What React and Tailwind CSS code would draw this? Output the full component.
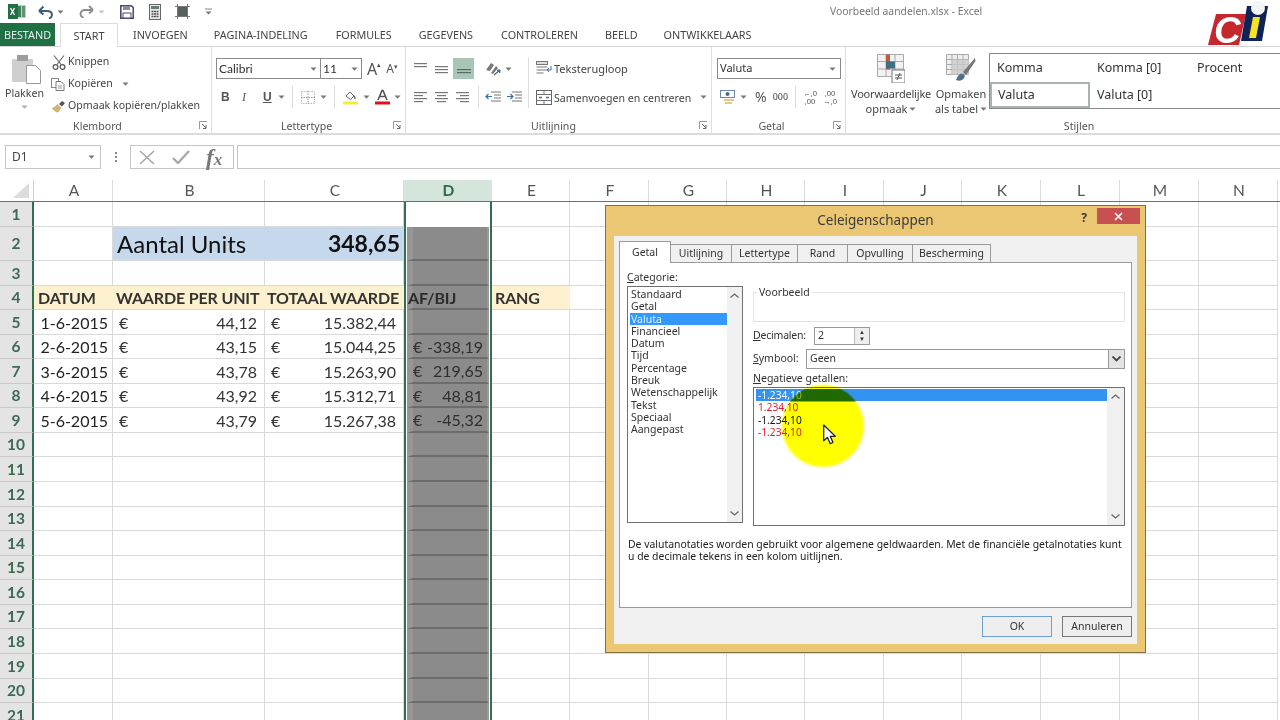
const ui = { fontFamily: '"Noto Sans", "Open Sans", sans-serif' }
const sheetFont = { fontFamily: 'Lato, "Liberation Sans", sans-serif' }

const tabs = [
  ['INVOEGEN', 'ml-[15px]'],
  ['PAGINA-INDELING', 'ml-[26px]'],
  ['FORMULES', 'ml-[28px]'],
  ['GEGEVENS', 'ml-[27px]'],
  ['CONTROLEREN', 'ml-[28px]'],
  ['BEELD', 'ml-[27px]'],
  ['ONTWIKKELAARS', 'ml-[26px]'],
]

const columns = [
  ['A', 'w-[79px]'], ['B', 'w-[152px]'], ['C', 'w-[139px]'], ['D', 'w-[88px]'], ['E', 'w-[78px]'],
  ['F', 'w-[79px]'], ['G', 'w-[78px]'], ['H', 'w-[78px]'], ['I', 'w-[79px]'], ['J', 'w-[78px]'],
  ['K', 'w-[79px]'], ['L', 'w-[79px]'], ['M', 'w-[79px]'], ['N', 'w-[79px]'],
]

const rowHeights = ['h-[25px]', 'h-[34px]', 'h-[25px]', 'h-[24px]', 'h-[25px]', 'h-[24px]', 'h-[25px]', 'h-[24px]', 'h-[25px]', 'h-[24px]', 'h-[25px]', 'h-[25px]', 'h-[24px]', 'h-[25px]', 'h-[24px]', 'h-[25px]', 'h-[24px]', 'h-[25px]', 'h-[25px]', 'h-[24px]', 'h-[25px]']

const data = {
  5: ['1-6-2015', '44,12', '15.382,44', null],
  6: ['2-6-2015', '43,15', '15.044,25', '-338,19'],
  7: ['3-6-2015', '43,78', '15.263,90', '219,65'],
  8: ['4-6-2015', '43,92', '15.312,71', '48,81'],
  9: ['5-6-2015', '43,79', '15.267,38', '-45,32'],
}

const categories = ['Standaard', 'Getal', 'Valuta', 'Financieel', 'Datum', 'Tijd', 'Percentage', 'Breuk', 'Wetenschappelijk', 'Tekst', 'Speciaal', 'Aangepast']
const dialogTabs = [
  ['Uitlijning', 'w-[61px]'], ['Lettertype', 'w-[66px]'], ['Rand', 'w-[50px]'], ['Opvulling', 'w-[65px]'], ['Bescherming', 'w-[78px]'],
]

function Caret({ className = '' }) {
  return (
    <svg width="7" height="4" viewBox="0 0 7 4" className={className}>
      <path d="M0.5 0.5h6L3.5 3.8z" fill="#777" />
    </svg>
  )
}

function Lines({ rows, active }) {
  return (
    <svg width="16" height="14" viewBox="0 0 16 14">
      {rows.map(([x, y, w], i) => (
        <rect key={i} x={x} y={y} width={w} height="1.2" fill={active ? '#5b6b62' : '#777'} />
      ))}
    </svg>
  )
}

function Launcher({ className = '' }) {
  return (
    <svg width="9" height="9" viewBox="0 0 9 9" className={className}>
      <path d="M0.5 8V0.5H8" fill="none" stroke="#999" />
      <path d="M3 3l4 4M7 4v3.5H4" fill="none" stroke="#666" />
    </svg>
  )
}

function Sep() {
  return <div className="h-[22px] w-px bg-[#dcdcdc]" />
}

function Group({ label, width, children, launcher, center }) {
  return (
    <div className={`relative flex h-full shrink-0 flex-col border-r border-[#dedede] ${width}`}>
      <div className="h-[73px]">{children}</div>
      <div className={`text-center text-[10.6px] leading-[14px] text-[#555] ${center}`}>{label}</div>
      {launcher && <Launcher className="absolute bottom-[3px] right-[3px]" />}
    </div>
  )
}

function TitleBar() {
  return (
    <div className="flex h-[23px] items-center">
      <svg width="18" height="15" viewBox="0 0 18 15" className="ml-[8px]">
        <rect x="6" y="1" width="12" height="13" fill="#bcd3c5" />
        <rect x="10" y="2" width="3" height="11" fill="#3d7f5b" />
        <rect x="14" y="2" width="3" height="11" fill="#5d946f" />
        <rect x="0" y="0" width="10" height="15" fill="#1f7145" />
        <path d="M2.5 4l4 7M6.5 4l-4 7" stroke="#fff" strokeWidth="1.4" />
      </svg>
      <svg width="16" height="14" viewBox="0 0 16 14" className="ml-[12px]">
        <path d="M1 6l4.5-4.5M1 6l4.5 3.5M1 6h8c3.5 0 5 2 5 4s-1 3-3 3.5" fill="none" stroke="#3f6077" strokeWidth="2" />
      </svg>
      <Caret className="ml-[3px]" />
      <svg width="15" height="14" viewBox="0 0 15 14" className="ml-[15px]">
        <path d="M14 5l-4-4M14 5l-4 3.5M14 5H6.5C3 5 1.5 7 1.5 9s1 3 3 3.5" fill="none" stroke="#8a8a8a" strokeWidth="1.8" />
      </svg>
      <Caret className="ml-[4px] opacity-40" />
      <svg width="14" height="14" viewBox="0 0 14 14" className="ml-[15px]">
        <path d="M0.8 0.8h10.5l2 2v10.4H0.8z" fill="none" stroke="#4a4a6a" strokeWidth="1.6" />
        <rect x="3" y="1" width="7" height="4" fill="#8c8ca8" />
        <rect x="3" y="8" width="8" height="5" fill="#fff" stroke="#4a4a6a" />
      </svg>
      <svg width="12" height="16" viewBox="0 0 12 16" className="ml-[15px]">
        <rect x="0.5" y="0.5" width="11" height="15" fill="#e8e8e8" stroke="#666" />
        <rect x="2" y="2" width="8" height="3" fill="#6a7a72" />
        <path d="M2.5 7.5h2M5 7.5h2M7.5 7.5h2M2.5 10h2M5 10h2M7.5 10h2M2.5 12.5h2M5 12.5h2M7.5 12.5h2" stroke="#555" strokeWidth="1.4" />
      </svg>
      <svg width="15" height="15" viewBox="0 0 15 15" className="ml-[14px]">
        <rect x="2.5" y="2.5" width="10" height="10" fill="#56605c" />
        <path d="M2.5 0v15M12.5 0v15M0 2.5h15M0 12.5h15" stroke="#777" strokeWidth="1" />
      </svg>
      <svg width="7" height="7" viewBox="0 0 7 7" className="ml-[15px]">
        <path d="M0 1h7" stroke="#888" />
        <path d="M0.5 3.5h6L3.5 6.5z" fill="#777" />
      </svg>
      <div className="ml-[618px] text-[10.35px] text-[#777]">Voorbeeld aandelen.xlsx - Excel</div>
    </div>
  )
}

function Tabs() {
  return (
    <div className="flex h-[24px] items-stretch border-b border-[#d6d6d6] text-[10.8px] text-[#444]">
      <div className="flex w-[55px] items-center justify-center bg-[#1f7145] pt-px text-[#e4efe8]">BESTAND</div>
      <div className="z-10 ml-[5px] mb-[-1px] flex w-[58px] items-center justify-center border-x border-t border-[#dcdcdc] bg-white pt-px">START</div>
      {tabs.map(([name, margin]) => (
        <div key={name} className={`flex items-center pt-px ${margin}`}>{name}</div>
      ))}
    </div>
  )
}

function Klembord() {
  return (
    <Group label="Klembord" width="w-[212px]" launcher center="pr-[16px]">
      <div className="flex text-[10.6px] text-[#444]">
        <div className="flex w-[49px] flex-col items-center pt-[8px]">
          <svg width="30" height="29" viewBox="0 0 30 29" className="ml-[4px]">
            <rect x="0" y="4" width="21" height="23" rx="1" fill="#cfcfcf" />
            <rect x="5" y="0" width="11" height="6" fill="#9d9d9d" />
            <path d="M14.5 10.5h9l5 5v13h-14z" fill="#fff" stroke="#999" />
          </svg>
          <div className="mt-[2px] leading-[14px]">Plakken</div>
          <Caret className="mt-[5px] opacity-60" />
        </div>
        <div className="flex flex-col pt-[4px]">
          <div className="flex h-[22px] items-center">
            <svg width="14" height="15" viewBox="0 0 14 15" className="ml-[3px]">
              <path d="M2 0.5l7 9M12 0.5l-7 9" stroke="#666" strokeWidth="1.1" />
              <circle cx="3.5" cy="12" r="2.4" fill="none" stroke="#555" strokeWidth="1.2" />
              <circle cx="10.5" cy="12" r="2.4" fill="none" stroke="#555" strokeWidth="1.2" />
            </svg>
            <span className="ml-[2px]">Knippen</span>
          </div>
          <div className="flex h-[22px] items-center">
            <svg width="14" height="13" viewBox="0 0 14 13" className="ml-[2px]">
              <rect x="0.5" y="0.5" width="7" height="9" fill="#fff" stroke="#888" />
              <path d="M5 3.5h5l3 3v6H5z" fill="#fff" stroke="#777" />
              <path d="M7 8h4M7 10h4" stroke="#999" />
            </svg>
            <span className="ml-[3px]">Kopiëren</span>
            <Caret className="ml-[9px]" />
          </div>
          <div className="flex h-[22px] items-center">
            <svg width="15" height="13" viewBox="0 0 15 13" className="ml-[2px]">
              <path d="M0.5 8c2 0 4-2 6-4l4 4c-2 2-2 4-4 4.5-2-.5-4-2-6-4.5z" fill="#d4b377" />
              <path d="M8 4l3-3 3 2-3 3.5z" fill="#555" />
            </svg>
            <span className="ml-[2px] whitespace-nowrap">Opmaak kopiëren/plakken</span>
          </div>
        </div>
      </div>
    </Group>
  )
}

function Lettertype() {
  return (
    <Group label="Lettertype" width="w-[194px]" launcher center="pr-[4px]">
      <div className="pt-[11px] pl-[4px]">
        <div className="flex items-center">
          <div className="flex h-[21px] w-[105px] items-center justify-between border border-[#8a8a8a] pl-[2px] pr-[3px] text-[#333]">
            <span style={sheetFont} className="text-[12px]">Calibri</span><Caret />
          </div>
          <div className="ml-[-1px] flex h-[21px] w-[42px] items-center justify-between border border-[#8a8a8a] pl-[2px] pr-[3px] text-[#333]">
            <span style={sheetFont} className="text-[12px]">11</span><Caret />
          </div>
          <div className="ml-[5px] flex items-start text-[16px] leading-none text-[#555]">A<span className="text-[7px]">▴</span></div>
          <div className="ml-[5px] flex items-start text-[12px] leading-none text-[#555]">A<span className="text-[7px]">▾</span></div>
        </div>
        <div className="mt-[7px] flex h-[22px] items-center text-[#555]">
          <span className="ml-[5px] w-[21px] text-[12px] font-bold" style={{ fontFamily: '"Liberation Sans"' }}>B</span>
          <span className="w-[21px] text-[12px] italic" style={{ fontFamily: '"Liberation Serif"' }}>I</span>
          <span className="w-[15px] text-[12px] font-bold underline" style={{ fontFamily: '"Liberation Sans"' }}>U</span>
          <Caret />
          <div className="mx-[7px]"><Sep /></div>
          <svg width="14" height="13" viewBox="0 0 14 13" className="ml-[1px]">
            <rect x="0.5" y="0.5" width="13" height="12" fill="none" stroke="#bbb" strokeDasharray="1.5 1" />
            <path d="M7 0v13M0 6.5h14" stroke="#999" strokeDasharray="1.5 1" />
          </svg>
          <Caret className="ml-[5px]" />
          <div className="mx-[7px]"><Sep /></div>
          <svg width="16" height="16" viewBox="0 0 16 16" className="ml-[1px]">
            <path d="M3 7l4-4 4 4-3.5 3.5z" fill="#fff" stroke="#666" />
            <path d="M11 7c1 1.5 1.5 2 1 3" fill="none" stroke="#666" strokeWidth="1.4" />
            <rect x="0" y="12.5" width="15" height="3" fill="#f3ee3a" />
          </svg>
          <Caret className="ml-[4px]" />
          <svg width="15" height="16" viewBox="0 0 15 16" className="ml-[5px]">
            <path d="M3 11L7 1.5h1L12 11M4.6 7.5h6" fill="none" stroke="#555" strokeWidth="1.6" />
            <rect x="0" y="12.5" width="15" height="3" fill="#d8131b" />
          </svg>
          <Caret className="ml-[4px]" />
        </div>
      </div>
    </Group>
  )
}

function Uitlijning() {
  return (
    <Group label="Uitlijning" width="w-[306px]" launcher center="pr-[10px]">
      <div className="flex pl-[8px] pt-[11px] text-[#444]">
        <div className="w-[64px]">
          <div className="flex h-[21px] items-center gap-[5px]">
            <Lines rows={[[0, 1, 13], [0, 4, 13]]} />
            <Lines rows={[[0, 4, 13], [0, 7, 13], [0, 10, 13]]} />
            <div className="ml-[-3px] flex h-[21px] w-[21px] shrink-0 items-center justify-center bg-[#a9c5b5]">
              <Lines rows={[[1, 7, 14], [1, 10, 14]]} active />
            </div>
          </div>
          <div className="mt-[7px] flex h-[22px] items-center gap-[5px]">
            <Lines rows={[[0, 2, 13], [0, 5, 9], [0, 8, 13], [0, 11, 9]]} />
            <Lines rows={[[0, 2, 13], [2, 5, 9], [0, 8, 13], [2, 11, 9]]} />
            <Lines rows={[[0, 2, 13], [4, 5, 9], [0, 8, 13], [4, 11, 9]]} />
          </div>
        </div>
        <div className="w-[50px]">
          <div className="flex h-[21px] items-center pl-[7px]">
            <svg width="17" height="14" viewBox="0 0 17 14">
              <path d="M1 8l5-7 3 2-4 6zM6 11l5-7 2 2-5 6z" fill="#777" />
              <path d="M9 13l6-5M15 8l-3 .5M15 8l-.5 3" fill="none" stroke="#4d6e88" strokeWidth="1.4" />
            </svg>
            <Caret className="ml-[3px]" />
          </div>
          <div className="mt-[7px] flex h-[22px] items-center gap-[5px] border-l border-[#dcdcdc] pl-[6px]">
            <svg width="16" height="12" viewBox="0 0 16 12"><path d="M6 1h10M9 4h7M9 7h7M6 10h10" stroke="#777" /><path d="M7 5.5H1M3.5 3L1 5.5 3.5 8" fill="none" stroke="#3c6f9f" strokeWidth="1.2" /></svg>
            <svg width="16" height="12" viewBox="0 0 16 12"><path d="M6 1h10M9 4h7M9 7h7M6 10h10" stroke="#777" /><path d="M1 5.5h6M4.5 3L7 5.5 4.5 8" fill="none" stroke="#3c6f9f" strokeWidth="1.2" /></svg>
          </div>
        </div>
        <div className="h-[50px] border-l border-[#dcdcdc] pl-[7px]">
          <div className="flex h-[21px] items-center text-[11px]">
            <svg width="16" height="15" viewBox="0 0 16 15">
              <rect x="0.5" y="0.5" width="11" height="3" fill="#ddd" stroke="#777" />
              <path d="M0.5 6h11M0.5 9h11M0.5 12h7" stroke="#777" />
              <path d="M15 5v4h-4M13 7l-2 2 2 2" fill="none" stroke="#3c6f9f" />
            </svg>
            <span className="ml-[2px] pt-px">Teksterugloop</span>
          </div>
          <div className="mt-[7px] flex h-[22px] items-center text-[10.6px]">
            <svg width="16" height="15" viewBox="0 0 16 15">
              <rect x="0.5" y="0.5" width="15" height="14" fill="#fff" stroke="#666" />
              <path d="M0.5 4.5h15M0.5 10.5h15M8 0.5v4M8 10.5v4" stroke="#777" />
              <path d="M3 7.5h3M10 7.5h3" stroke="#3c6f9f" strokeWidth="1.3" />
            </svg>
            <span className="ml-[2px] whitespace-nowrap pt-[3px]">Samenvoegen en centreren</span>
            <Caret className="ml-[9px]" />
          </div>
        </div>
      </div>
    </Group>
  )
}

function Getal() {
  return (
    <Group label="Getal" width="w-[134px]" launcher center="pr-[14px]">
      <div className="pl-[5px] pt-[11px]">
        <div className="flex h-[21px] w-[124px] items-center justify-between border border-[#8a8a8a] pl-[2px] pr-[4px] text-[11px] text-[#333]">
          <span>Valuta</span><Caret />
        </div>
        <div className="mt-[7px] flex h-[22px] items-center text-[#555]">
          <svg width="16" height="15" viewBox="0 0 16 15" className="ml-[3px]">
            <rect x="0.5" y="0.5" width="14" height="7" fill="#fff" stroke="#6a8aa8" />
            <circle cx="7.5" cy="4" r="2" fill="#4a6a88" />
            <rect x="4" y="9" width="10" height="2" fill="#e8c88a" />
            <rect x="5" y="12" width="7" height="2" fill="#e8c88a" />
          </svg>
          <Caret className="ml-[4px]" />
          <span className="ml-[8px] text-[14px] leading-none">%</span>
          <span className="ml-[6px] text-[9px] font-medium">000</span>
          <div className="ml-[7px]"><Sep /></div>
          <span className="ml-[5px] w-[18px] text-center text-[7.5px] leading-[8px] text-[#555]">←,0<br />,00</span>
          <span className="ml-[2px] w-[18px] text-center text-[7.5px] leading-[8px] text-[#555]">,00<br />→,0</span>
        </div>
      </div>
    </Group>
  )
}

function Styles() {
  return (
    <div className="relative flex h-full flex-1 flex-col">
      <div className="flex h-[73px]">
        <div className="ml-[10px] flex w-[70px] shrink-0 flex-col items-center pt-[7px] text-[11px] leading-[15px] text-[#444]">
          <svg width="28" height="29" viewBox="0 0 28 29">
            <path d="M0.5 0.5h26v22h-26zM0.5 7.5h26M0.5 15h26M9 0.5v22M18 0.5v22" fill="#f2f2f2" stroke="#aaa" />
            <rect x="9" y="0.5" width="4" height="15" fill="#bf5b3f" />
            <rect x="9" y="7.5" width="9" height="7" fill="#3f6c86" />
            <rect x="15" y="16" width="13" height="13" fill="#fff" stroke="#777" />
            <path d="M18 21h7M18 24h7M20 26l3-7" stroke="#555" />
          </svg>
          <span className="mt-[3px] whitespace-nowrap tracking-[-0.2px]">Voorwaardelijke</span>
          <span className="flex items-center">opmaak <Caret className="ml-[2px]" /></span>
        </div>
        <div className="flex w-[70px] shrink-0 flex-col items-center pt-[7px] text-[11px] leading-[15px] text-[#444]">
          <svg width="30" height="29" viewBox="0 0 30 29">
            <path d="M0.5 0.5h22v20h-22zM0.5 5.5h22M0.5 10.5h22M0.5 15.5h22M6 0.5v20M11.5 0.5v20M17 0.5v20" fill="#eee" stroke="#aaa" />
            <rect x="6" y="5.5" width="17" height="15" fill="#c9c9c9" opacity="0.8" />
            <path d="M29 4L17 18l3 3L29.5 7z" fill="#777" />
            <path d="M10 26c2-6 5-7 7-6 2 1 3 3-1 6-2 1-4 1-6 0z" fill="#4a7390" />
          </svg>
          <span className="mt-[3px]">Opmaken</span>
          <span className="flex items-center whitespace-nowrap">als tabel <Caret className="ml-[2px]" /></span>
        </div>
        <div className="ml-[-7px] mt-[6px] grid h-[56px] flex-1 grid-cols-[100px_100px_1fr] grid-rows-[28px_26px] border border-r-0 border-[#888] text-[12.5px] text-[#333]">
          <div className="flex items-center pl-[7px]">Komma</div>
          <div className="flex items-center pl-[7px]">Komma [0]</div>
          <div className="flex items-center pl-[7px]">Procent</div>
          <div className="flex items-center border-2 border-[#a7b5ae] pl-[6px]">Valuta</div>
          <div className="flex items-center pl-[7px]">Valuta [0]</div>
        </div>
      </div>
      <div className="pl-[32px] text-center text-[10.6px] leading-[14px] text-[#555]">Stijlen</div>
    </div>
  )
}

function Logo() {
  return (
    <svg width="66" height="52" viewBox="0 0 66 52" className="absolute left-[1207px] top-0 z-20">
      <path d="M9 14h30l-7 31H1z" fill="#c6262e" />
      <text x="7" y="43" fontFamily="Liberation Sans" fontWeight="700" fontStyle="italic" fontSize="37" fill="#fff">C</text>
      <path d="M40 6h21l-6 35H34z" fill="#0f2358" />
      <path d="M46 17h7l-4 21h-7z" fill="#f7e225" />
      <circle cx="51" cy="8" r="7" fill="#f4f4f4" />
    </svg>
  )
}

function FormulaBar() {
  return (
    <div className="mt-[10px] flex h-[24px]">
      <div className="ml-[5px] flex w-[96px] items-center justify-between border border-[#c6c6c6] pl-[6px] pr-[5px] text-[12px] text-[#444]">
        <span>D1</span><Caret />
      </div>
      <div className="flex w-[29px] flex-col items-center justify-center gap-[2px]">
        <span className="h-[2px] w-[2px] bg-[#888]" />
        <span className="h-[2px] w-[2px] bg-[#888]" />
        <span className="h-[2px] w-[2px] bg-[#888]" />
      </div>
      <div className="flex w-[104px] items-center border border-[#c6c6c6]">
        <svg width="16" height="15" viewBox="0 0 16 15" className="ml-[8px]"><path d="M1 1l14 13M15 1L1 14" stroke="#a9a9a9" strokeWidth="1.6" /></svg>
        <svg width="18" height="14" viewBox="0 0 18 14" className="ml-[17px]"><path d="M1 8l5 5L17 1" fill="none" stroke="#a9a9a9" strokeWidth="2.4" /></svg>
        <span className="ml-[16px] text-[23px] font-bold italic leading-none text-[#777]" style={{ fontFamily: '"Liberation Serif"' }}>f<span className="text-[17px]">x</span></span>
      </div>
      <div className="ml-[3px] flex-1 border-y border-l border-[#c6c6c6]" />
    </div>
  )
}

function Cell({ column, row }) {
  const values = data[row]
  const selected = column === 'D'
  const amber = row === 4 && (column === 'A' || column === 'B' || column === 'C' || column === 'E')
  const blue = row === 2 && (column === 'B' || column === 'C')
  let content = null
  let fill = 'border-r border-b border-[#d9d9d9]'
  if (blue) fill = 'border-b border-[#d9d9d9] bg-[#c6d9ec]'
  if (amber) fill = 'border-b border-[#d9d9d9] bg-[#fdf1d0]'
  if (selected) fill = row === 1 ? '' : 'mx-px border-b-2 border-b-[#6c6c6c] border-l-[6px] border-l-[#969696] border-r-2 border-r-[#999] bg-[#8b8b8b]'

  if (row === 2 && column === 'B') {
    content = <span className="whitespace-nowrap pl-[4px] text-[24px] text-[#111]">Aantal Units</span>
  }
  if (row === 2 && column === 'C') {
    content = <span className="ml-auto pr-[4px] text-[23px] font-bold text-[#111]">348,65</span>
  }
  if (row === 4) {
    const heads = { A: ['DATUM', 'pl-[4px]'], B: ['WAARDE PER UNIT', 'pl-[3px]'], C: ['TOTAAL WAARDE', 'pl-[2px]'], D: ['AF/BIJ', 'ml-[-5px] text-[#2c2c2c]'], E: ['RANG', 'pl-[3px]'] }
    if (heads[column]) {
      content = <span className={`whitespace-nowrap pt-px text-[16px] font-bold tracking-[-0.15px] ${heads[column][1]}`}>{heads[column][0]}</span>
    }
  }
  if (values) {
    if (column === 'A') content = <span className="ml-auto pr-[4px] pt-px text-[16px] text-[#222]">{values[0]}</span>
    if (column === 'B' || column === 'C') {
      content = (
        <>
          <span className="pl-[6px] pt-px text-[16px]">€</span>
          <span className="ml-auto pr-[7px] pt-px text-[16px]">{values[column === 'B' ? 1 : 2]}</span>
        </>
      )
    }
    if (column === 'D' && values[3]) {
      content = (
        <>
          <span className="pt-px text-[16px] text-[#333]">€</span>
          <span className="ml-auto pr-[4px] pt-px text-[16px] text-[#2e2e2e]">{values[3]}</span>
        </>
      )
    }
  }

  return (
    <div className={`flex h-full shrink-0 ${columns.find((c) => c[0] === column)[1]} ${selected ? 'border-x-2 border-x-[#2f6f52]' : ''}`}>
      <div className={`flex h-full min-w-0 flex-1 items-center ${fill}`}>{content}</div>
    </div>
  )
}

function Sheet() {
  return (
    <div style={sheetFont} className="mt-[11px] text-[#333]">
      <div className="flex h-[22px] border-b border-[#5c7a6c] text-[15.5px]">
        <div className="flex w-[34px] shrink-0 items-end justify-end border-r border-[#d0d0d0] pb-[3px] pr-[4px]">
          <svg width="16" height="15" viewBox="0 0 16 15"><path d="M16 0v15H0z" fill="#dcdcdc" /></svg>
        </div>
        {columns.map(([name, width]) => (
          <div
            key={name}
            className={`flex shrink-0 items-center justify-center border-r pl-[2px] ${width} ${name === 'D' ? 'border-[#d4e6dc] bg-[#d4e6dc] font-bold text-[#2a6b4d]' : 'border-[#dcdcdc] text-[#555]'}`}
          >
            {name}
          </div>
        ))}
      </div>
      {rowHeights.map((height, i) => (
        <div key={i} className={`flex ${height}`}>
          <div className="flex w-[34px] shrink-0 items-center justify-center border-b border-r-2 border-b-[#c8c8c8] border-r-[#2f6f52] bg-[#e3e4e3] pt-px text-[15.5px] font-bold text-[#3c6a55]">
            {i + 1}
          </div>
          {columns.map(([name]) => (
            <Cell key={name} column={name} row={i + 1} />
          ))}
        </div>
      ))}
    </div>
  )
}

function ScrollArrows({ width = 'w-[17px]' }) {
  return (
    <div className={`flex shrink-0 flex-col items-center justify-between bg-[#f0f0f0] py-[6px] ${width}`}>
      <svg width="9" height="5" viewBox="0 0 9 5"><path d="M0.5 4.5l4-3.5 4 3.5" fill="none" stroke="#666" strokeWidth="1.3" /></svg>
      <svg width="9" height="5" viewBox="0 0 9 5"><path d="M0.5 0.5l4 3.5 4-3.5" fill="none" stroke="#666" strokeWidth="1.3" /></svg>
    </div>
  )
}

function NegativeRow({ children, className }) {
  return <div className={`h-[12.3px] pl-[2px] text-[10.2px] leading-[12.3px] ${className}`}>{children}</div>
}

function Dialog() {
  return (
    <div style={ui} className="absolute left-[605px] top-[205px] z-10 flex h-[448px] w-[541px] flex-col border border-[#857044] bg-[#ebc673] px-[8px] pb-[8px] text-[10.5px] text-[#333]">
      <div className="relative flex h-[30px] shrink-0 items-center justify-center pb-[2px] text-[13.5px] text-[#3a3a3a]">
        Celeigenschappen
        <span className="absolute right-[50px] top-[3px] text-[12px] font-bold">?</span>
        <div className="absolute right-[-3px] top-[2px] flex h-[16px] w-[43px] items-center justify-center bg-[#c75050]">
          <svg width="9" height="9" viewBox="0 0 9 9"><path d="M1 1l7 7M8 1L1 8" stroke="#fff" strokeWidth="1.6" /></svg>
        </div>
      </div>
      <div className="flex flex-1 flex-col bg-[#f0f0f0] px-[5px]">
        <div className="flex h-[26px] items-end">
          <div className="z-10 mb-[-1px] flex h-[22px] w-[52px] items-center justify-center border border-b-0 border-[#9a9a9a] bg-white">Getal</div>
          {dialogTabs.map(([name, width]) => (
            <div key={name} className={`flex h-[18px] items-center justify-center border border-l-0 border-b-0 border-[#9a9a9a] bg-[#f0f0f0] ${width}`}>{name}</div>
          ))}
        </div>
        <div className="h-[346px] border border-[#9a9a9a] bg-white pl-[7px] pr-[6px] pt-[7px]">
          <div className="flex h-[264px] gap-[10px]">
            <div className="w-[116px] shrink-0">
              <div className="h-[16px] leading-[14px]"><span className="underline">C</span>ategorie:</div>
              <div className="flex h-[237px] border border-[#707070]">
                <div className="flex-1 pl-[2px] pt-px">
                  {categories.map((c) => (
                    <div key={c} className={`h-[12.3px] whitespace-nowrap pl-px leading-[12.3px] ${c === 'Valuta' ? 'bg-[#3399ff] text-[#dff0ff]' : ''}`}>{c}</div>
                  ))}
                </div>
                <ScrollArrows width="w-[15px]" />
              </div>
            </div>
            <div className="flex-1 pt-[22px]">
              <div className="relative h-[30px] border border-[#e3e3e3]">
                <span className="absolute left-[3px] top-[-8px] bg-white px-[2px] leading-[14px]">Voorbeeld</span>
              </div>
              <div className="mt-[5px] flex h-[18px] items-center">
                <span className="w-[61px] whitespace-nowrap tracking-[-0.2px]"><span className="underline">D</span>ecimalen:</span>
                <div className="flex h-[18px] w-[56px] items-center justify-between border border-[#999] pl-[3px]">
                  <span>2</span>
                  <div className="flex h-full w-[15px] flex-col items-center justify-center border-l border-[#bbb] bg-[#eee] text-[6px] leading-[7px]">
                    <span>▲</span><span>▼</span>
                  </div>
                </div>
              </div>
              <div className="mt-[4px] flex h-[20px] items-center">
                <span className="w-[53px] whitespace-nowrap"><span className="underline">S</span>ymbool:</span>
                <div className="flex h-[20px] flex-1 items-center justify-between border border-[#999] pl-[3px]">
                  <span>Geen</span>
                  <div className="flex h-full w-[16px] items-center justify-center border-l border-[#999] bg-[#e4e4e4]">
                    <svg width="9" height="6" viewBox="0 0 9 6"><path d="M0.5 0.5l4 4 4-4" fill="none" stroke="#444" strokeWidth="1.8" /></svg>
                  </div>
                </div>
              </div>
              <div className="mt-[2px] h-[16px] leading-[14px]"><span className="underline">N</span>egatieve getallen:</div>
              <div className="flex h-[139px] border border-[#707070]">
                <div className="flex-1 pl-[2px] pt-px">
                  <NegativeRow className="bg-[#3393f0] text-white">-1.234,10</NegativeRow>
                  <NegativeRow className="text-[#e01e2e]">1.234,10</NegativeRow>
                  <NegativeRow className="text-[#111]">-1.234,10</NegativeRow>
                  <NegativeRow className="text-[#e01e2e]">-1.234,10</NegativeRow>
                </div>
                <ScrollArrows />
              </div>
            </div>
          </div>
          <p className="ml-px mt-[4px] w-[500px] text-[10.42px] leading-[12.3px] text-[#222]">
            De valutanotaties worden gebruikt voor algemene geldwaarden. Met de financiële getalnotaties kunt u de decimale tekens in een kolom uitlijnen.
          </p>
        </div>
        <div className="flex flex-1 items-center justify-end gap-[10px] pt-px">
          <div className="flex h-[21px] w-[70px] items-center justify-center border border-[#6d9fd1] bg-[#eeeeee]">OK</div>
          <div className="flex h-[21px] w-[70px] items-center justify-center border border-[#777] bg-[#eeeeee]">Annuleren</div>
        </div>
      </div>
    </div>
  )
}

function Highlight() {
  return (
    <>
      <div className="absolute left-[782px] top-[385px] z-20 h-[82px] w-[82px] rounded-full bg-[#ffff00] blur-[1px] mix-blend-multiply" />
      {/* the selected row goes darker under the pointer spot */}
      <div className="absolute left-[782px] top-[389px] z-20 h-[13px] w-[82px] overflow-hidden mix-blend-multiply">
        <div className="mt-[-4px] h-[82px] w-[82px] rounded-full bg-[#a0b4ff]" />
      </div>
      <svg width="15" height="21" viewBox="0 0 14 20" className="absolute left-[822px] top-[424px] z-30">
        <path d="M1.5 1v15l3.5-3.3 2.7 6 2.6-1.2-2.6-5.800h4.800z" fill="#fff" stroke="#222" strokeWidth="1.2" strokeLinejoin="round" />
      </svg>
    </>
  )
}

export default function App() {
  return (
    <div style={ui} className="relative h-[720px] w-[1280px] overflow-hidden bg-white blur-[0.4px]">
      <TitleBar />
      <Tabs />
      <div className="flex h-[88px] border-b-2 border-[#dcdcdc]">
        <Klembord />
        <Lettertype />
        <Uitlijning />
        <Getal />
        <Styles />
      </div>
      <FormulaBar />
      <Sheet />
      <Logo />
      <Dialog />
      <Highlight />
    </div>
  )
}
